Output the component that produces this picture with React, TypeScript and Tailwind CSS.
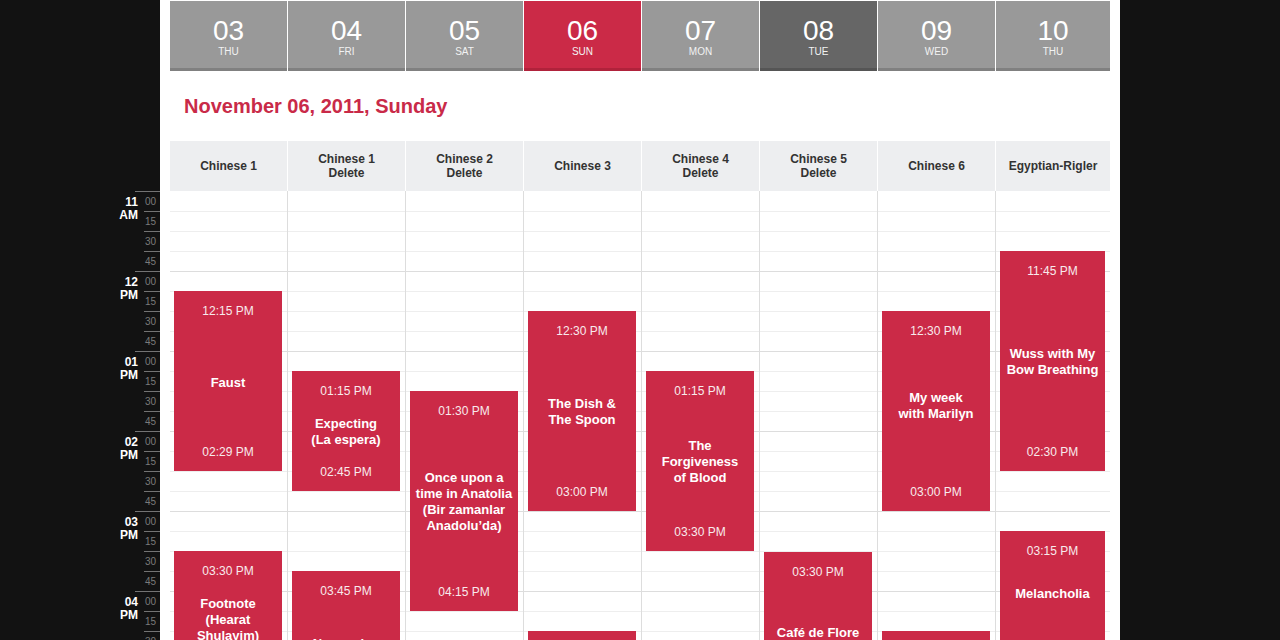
import React from "react";

type Ev = { top: number; h: number; start: string; end: string; title: string; adj?: string };

const tabs = [
  { n: "03", d: "THU", kind: "normal" },
  { n: "04", d: "FRI", kind: "normal" },
  { n: "05", d: "SAT", kind: "normal" },
  { n: "06", d: "SUN", kind: "active" },
  { n: "07", d: "MON", kind: "normal" },
  { n: "08", d: "TUE", kind: "dark" },
  { n: "09", d: "WED", kind: "normal" },
  { n: "10", d: "THU", kind: "normal" },
];

const heads = [
  ["Chinese 1"],
  ["Chinese 1", "Delete"],
  ["Chinese 2", "Delete"],
  ["Chinese 3"],
  ["Chinese 4", "Delete"],
  ["Chinese 5", "Delete"],
  ["Chinese 6"],
  ["Egyptian-Rigler"],
];

const cols: Ev[][] = [
  [
    { top: 100, h: 180, start: "12:15 PM", end: "02:29 PM", title: "Faust", adj: "mt-[3px]" },
    { top: 360, h: 136, start: "03:30 PM", end: "05:15 PM", title: "Footnote (Hearat Shulayim)" },
  ],
  [
    { top: 180, h: 120, start: "01:15 PM", end: "02:45 PM", title: "Expecting (La espera)" },
    { top: 380, h: 160, start: "03:45 PM", end: "05:45 PM", title: "Norwegian Wood" },
  ],
  [
    { top: 200, h: 220, start: "01:30 PM", end: "04:15 PM", title: "Once upon a time in Anatolia (Bir zamanlar Anadolu\u2019da)" },
  ],
  [
    { top: 120, h: 200, start: "12:30 PM", end: "03:00 PM", title: "The Dish & The Spoon" },
    { top: 440, h: 120, start: "04:15 PM", end: "05:45 PM", title: "Le Havre" },
  ],
  [
    { top: 180, h: 180, start: "01:15 PM", end: "03:30 PM", title: "The Forgiveness of Blood" },
  ],
  [
    { top: 361, h: 160, start: "03:30 PM", end: "05:30 PM", title: "Caf\u00e9 de Flore" },
  ],
  [
    { top: 120, h: 200, start: "12:30 PM", end: "03:00 PM", title: "My week with Marilyn", adj: "mb-[12px]" },
    { top: 440, h: 120, start: "04:15 PM", end: "05:45 PM", title: "Tyrannosaur" },
  ],
  [
    { top: 60, h: 220, start: "11:45 PM", end: "02:30 PM", title: "Wuss with My Bow Breathing" },
    { top: 340, h: 122, start: "03:15 PM", end: "", title: "Melancholia", adj: "mt-[2px]" },
  ],
];

const hours = [
  ["11", "AM"],
  ["12", "PM"],
  ["01", "PM"],
  ["02", "PM"],
  ["03", "PM"],
  ["04", "PM"],
  ["05", "PM"],
  ["06", "PM"],
];

const rows = Array.from({ length: 32 }, (_, i) => i);

function Tab({ n, d, kind }: { n: string; d: string; kind: string }) {
  const cls =
    kind === "active"
      ? "bg-[#cb2a47] border-[#b0223b]"
      : kind === "dark"
      ? "bg-[#666666] border-[#555555]"
      : "bg-[#999999] border-[#808080]";
  return (
    <div className={`flex h-[70px] flex-col items-center border-b-[3px] pt-[16px] text-white ${cls}`}>
      <div className="text-[28px] leading-[28px]">{n}</div>
      <div className="mt-px text-[10px] leading-[12px] text-[#f2f2f2]">{d}</div>
    </div>
  );
}

function Event({ e }: { e: Ev }) {
  return (
    <div
      className="absolute left-[4px] right-[5px] flex flex-col items-center justify-between bg-[#cb2a47] px-[4px] pt-[13px] pb-[12px] text-center text-white"
      style={{ top: e.top, height: e.h }}
    >
      <div className="h-[14px] text-[12px] leading-[14px] text-[#f8eaec]">{e.start}</div>
      <div className={`text-[13px] font-bold leading-[16px] text-balance ${e.adj ?? ""}`}>{e.title}</div>
      <div className="h-[14px] text-[12px] leading-[14px] text-[#f8eaec]">{e.end}</div>
    </div>
  );
}

export default function App() {
  return (
    <div className="flex h-[640px] w-full overflow-hidden bg-[#121212] font-['Liberation_Sans',Arial,sans-serif]">
      {/* time labels */}
      <div className="flex w-[160px] shrink-0 flex-col items-end pt-[191px]">
        {hours.map(([h, ap]) => (
          <div key={h + ap} className="flex h-[80px] w-[52px] shrink-0">
            <div className="flex w-[36px] flex-col">
              <div className="h-px w-[9px] self-end bg-[#737373]" />
              <div className="mt-[4px] pr-[6px] text-right text-[12px] font-bold leading-[13px] text-white">
                <div>{h}</div>
                <div>{ap}</div>
              </div>
            </div>
            <div className="flex w-[16px] flex-col">
              {["00", "15", "30", "45"].map((m) => (
                <div
                  key={m}
                  className="h-[20px] border-t border-[#737373] pl-px text-[10px] leading-[19px] text-[#7a7a7a]"
                >
                  {m}
                </div>
              ))}
            </div>
          </div>
        ))}
      </div>

      {/* white page */}
      <div className="w-[960px] shrink-0 bg-white px-[10px] pt-px">
        <div className="flex gap-px">
          {tabs.map((t, i) => (
            <div key={i} className={i === 7 ? "flex-1" : "w-[117px] shrink-0"}>
              <Tab {...t} />
            </div>
          ))}
        </div>

        <div className="py-[23px] pl-[14px] text-[20px] font-bold leading-[24px] text-[#c92a48]">
          November 06, 2011, Sunday
        </div>

        <div className="flex h-[50px] gap-px">
          {heads.map((h, i) => (
            <div
              key={i}
              className={`flex flex-col items-center justify-center bg-[#edeef0] text-center text-[12px] font-bold leading-[14px] text-[#333333] ${
                i === 7 ? "flex-1" : "w-[117px] shrink-0"
              }`}
            >
              {h.map((l, j) => (
                <div key={j}>{l}</div>
              ))}
            </div>
          ))}
        </div>

        <div className="flex">
          {cols.map((evs, ci) => (
            <div
              key={ci}
              className={`relative ${ci === 7 ? "flex-1" : "w-[118px] shrink-0 border-r border-[#dddddd]"}`}
            >
              {rows.map((r) => (
                <div
                  key={r}
                  className={`h-[20px] border-t ${
                    r === 0 ? "border-transparent" : r % 4 === 0 ? "border-[#dddddd]" : "border-[#eeeeee]"
                  }`}
                />
              ))}
              {evs.map((e, ei) => (
                <Event key={ei} e={e} />
              ))}
            </div>
          ))}
        </div>
      </div>

      <div className="w-[160px] shrink-0" />
    </div>
  );
}
